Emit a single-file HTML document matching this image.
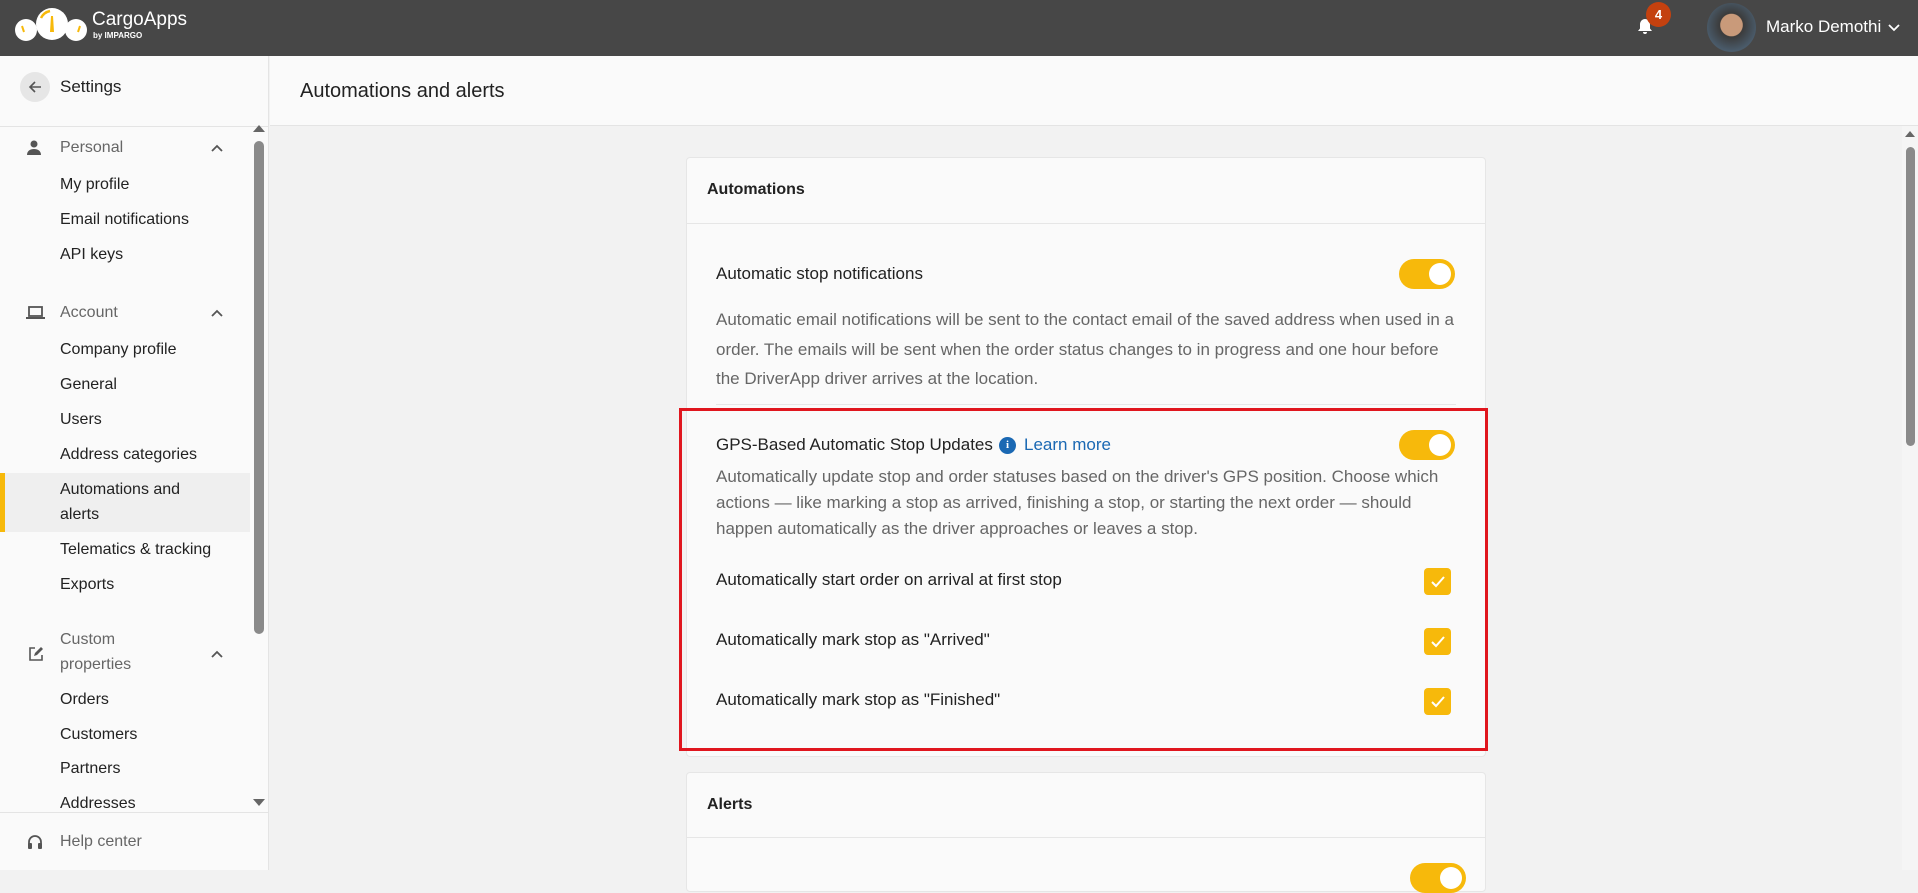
<!DOCTYPE html>
<html><head><meta charset="utf-8">
<style>
*{margin:0;padding:0;box-sizing:border-box}
body{width:1918px;height:870px;overflow:hidden;font-family:"Liberation Sans",sans-serif;background:#f2f2f2;position:relative;color:#222}
.a{position:absolute;white-space:nowrap}
.top{left:0;top:0;width:1918px;height:56px;background:#474747}
.side{left:0;top:56px;width:269px;height:814px;background:#fafafa;border-right:1px solid #e4e4e4}
.si{font-size:16px;color:#222;left:60px}
.sh{font-size:16px;color:#666;left:60px}
.card{background:#fafafa;border:1px solid #e6e6e6;border-radius:4px}
.tog{width:56px;height:30px;border-radius:15px;background:#f7b90b}
.tog::after{content:"";position:absolute;right:4px;top:4px;width:22px;height:22px;border-radius:50%;background:#fff}
.cb{width:27px;height:27px;border-radius:4px;background:#f7b90b}
.desc{font-size:17px;color:#666;line-height:29.5px;white-space:normal}
.lbl{font-size:17px;color:#222}
</style></head><body>
<div class="a top"></div>
<svg class="a" style="left:12px;top:6px" width="80" height="38" viewBox="0 0 80 38">
<circle cx="14" cy="24" r="11" fill="#fff"/><circle cx="64" cy="24" r="11" fill="#fff"/>
<circle cx="40" cy="18" r="16" fill="#fff"/>
<path d="M29 12 A13 13 0 0 1 38 5" stroke="#f7b90b" stroke-width="2.5" fill="none"/>
<path d="M39 10 L41 10 L42 26 L38 26Z" fill="#f7b90b"/>
<path d="M10 20 L12 26" stroke="#f7b90b" stroke-width="2"/><path d="M68 20 L66 26" stroke="#f7b90b" stroke-width="2"/>
</svg>
<div class="a" style="left:92px;top:9px;color:#fff;font-size:19px">CargoApps</div>
<div class="a" style="left:93px;top:31px;color:#fff;font-size:8px;font-weight:bold">by IMPARGO</div>
<svg class="a" style="left:1637px;top:18px" width="16" height="18" viewBox="0 0 16 18"><path d="M8 1c-3 0-5 2.5-5 5.5v4L1 13h14l-2-2.5v-4C13 3.5 11 1 8 1z M6 14a2 2 0 0 0 4 0z" fill="#fff"/></svg>
<div class="a" style="left:1646px;top:2px;width:25px;height:25px;border-radius:50%;background:#c4410f;color:#fff;font-size:13px;font-weight:bold;text-align:center;line-height:25px">4</div>
<div class="a" style="left:1707px;top:3px;width:49px;height:49px;border-radius:50%;background:radial-gradient(circle at 50% 45%,#c99a7a 0 30%,#3b3b3b 32%,#4a5b6a 70%)"></div>
<div class="a" style="left:1766px;top:17px;color:#fff;font-size:17px">Marko Demothi</div>
<svg class="a" style="left:1888px;top:24px" width="12" height="8"><path d="M1 1l5 5 5-5" stroke="#fff" stroke-width="1.8" fill="none"/></svg>

<div class="a side"></div>
<div class="a" style="left:0;top:126px;width:269px;height:1px;background:#e4e4e4"></div>
<div class="a" style="left:20px;top:72px;width:30px;height:30px;border-radius:50%;background:#e6e6e6"></div>
<svg class="a" style="left:28px;top:80px" width="14" height="14"><path d="M13 7H2M7 2L2 7l5 5" stroke="#555" stroke-width="1.6" fill="none"/></svg>
<div class="a" style="left:60px;top:77px;font-size:17px;color:#222">Settings</div>
<svg class="a" style="left:27px;top:140px" width="14" height="16"><circle cx="7" cy="4" r="3.5" fill="#555"/><path d="M0 15c0-4 3-6 7-6s7 2 7 6z" fill="#555"/></svg>
<div class="a sh" style="top:139px">Personal</div>
<svg class="a" style="left:211px;top:144px" width="12" height="8"><path d="M1 7l5-5 5 5" stroke="#555" stroke-width="1.8" fill="none"/></svg>
<div class="a si" style="top:176px">My profile</div>
<div class="a si" style="top:211px">Email notifications</div>
<div class="a si" style="top:246px">API keys</div>
<svg class="a" style="left:26px;top:306px" width="19" height="14"><rect x="3" y="1" width="13" height="9" fill="none" stroke="#555" stroke-width="1.8"/><path d="M0 12h19" stroke="#555" stroke-width="2"/></svg>
<div class="a sh" style="top:304px">Account</div>
<svg class="a" style="left:211px;top:309px" width="12" height="8"><path d="M1 7l5-5 5 5" stroke="#555" stroke-width="1.8" fill="none"/></svg>
<div class="a si" style="top:341px">Company profile</div>
<div class="a si" style="top:376px">General</div>
<div class="a si" style="top:411px">Users</div>
<div class="a si" style="top:446px">Address categories</div>
<div class="a" style="left:0;top:473px;width:250px;height:59px;background:#efefef"></div>
<div class="a" style="left:0;top:473px;width:5px;height:59px;background:#f7b90b"></div>
<div class="a si" style="top:481px">Automations and</div>
<div class="a si" style="top:506px">alerts</div>
<div class="a si" style="top:541px">Telematics &amp; tracking</div>
<div class="a si" style="top:576px">Exports</div>
<svg class="a" style="left:28px;top:646px" width="16" height="16"><path d="M7 2H2v12h12V9" stroke="#555" stroke-width="1.6" fill="none"/><path d="M6 10l1-3 6-6 2 2-6 6z" fill="#555"/></svg>
<div class="a sh" style="top:631px">Custom</div>
<div class="a sh" style="top:656px">properties</div>
<svg class="a" style="left:211px;top:650px" width="12" height="8"><path d="M1 7l5-5 5 5" stroke="#555" stroke-width="1.8" fill="none"/></svg>
<div class="a si" style="top:691px">Orders</div>
<div class="a si" style="top:726px">Customers</div>
<div class="a si" style="top:760px">Partners</div>
<div class="a si" style="top:795px">Addresses</div>
<svg class="a" style="left:253px;top:124px" width="12" height="9"><path d="M0 8L6 1l6 7z" fill="#666"/></svg>
<div class="a" style="left:254px;top:141px;width:10px;height:493px;border-radius:5px;background:#8a8a8a"></div>
<svg class="a" style="left:253px;top:798px" width="12" height="9"><path d="M0 1L6 8l6-7z" fill="#666"/></svg>
<div class="a" style="left:0;top:812px;width:269px;height:58px;background:#fafafa;border-top:1px solid #e4e4e4;border-right:1px solid #e4e4e4"></div>
<svg class="a" style="left:27px;top:835px" width="16" height="16"><path d="M2 9V7a6 6 0 0 1 12 0v2" stroke="#555" stroke-width="1.8" fill="none"/><rect x="1" y="8" width="4" height="6" rx="1" fill="#555"/><rect x="11" y="8" width="4" height="6" rx="1" fill="#555"/></svg>
<div class="a sh" style="top:833px">Help center</div>

<div class="a" style="left:270px;top:56px;width:1648px;height:70px;background:#fafafa;border-bottom:1px solid #e4e4e4"></div>
<div class="a" style="left:300px;top:80px;font-size:20px;color:#222">Automations and alerts</div>

<div class="a card" style="left:686px;top:157px;width:800px;height:600px"></div>
<div class="a" style="left:687px;top:223px;width:798px;height:1px;background:#e6e6e6"></div>
<div class="a" style="left:707px;top:181px;font-size:16px;font-weight:bold;color:#222">Automations</div>
<div class="a lbl" style="left:716px;top:264px">Automatic stop notifications</div>
<div class="a tog" style="left:1399px;top:259px"></div>
<div class="a desc" style="left:716px;top:305px;width:740px">Automatic email notifications will be sent to the contact email of the saved address when used in a order. The emails will be sent when the order status changes to in progress and one hour before the DriverApp driver arrives at the location.</div>
<div class="a" style="left:716px;top:404px;width:740px;height:1px;background:#e6e6e6"></div>

<div class="a" style="left:679px;top:408px;width:809px;height:343px;border:3px solid #e0161e"></div>
<div class="a lbl" style="left:716px;top:435px">GPS-Based Automatic Stop Updates</div>
<div class="a" style="left:999px;top:437px;width:17px;height:17px;border-radius:50%;background:#1a68b3;color:#fff;font-size:11px;font-weight:bold;text-align:center;line-height:17px;font-family:'Liberation Serif',serif">i</div>
<div class="a" style="left:1024px;top:435px;font-size:17px;color:#1a68b3">Learn more</div>
<div class="a tog" style="left:1399px;top:430px"></div>
<div class="a desc" style="left:716px;top:464px;width:740px;line-height:26px">Automatically update stop and order statuses based on the driver's GPS position. Choose which actions — like marking a stop as arrived, finishing a stop, or starting the next order — should happen automatically as the driver approaches or leaves a stop.</div>
<div class="a lbl" style="left:716px;top:570px">Automatically start order on arrival at first stop</div>
<div class="a lbl" style="left:716px;top:630px">Automatically mark stop as "Arrived"</div>
<div class="a lbl" style="left:716px;top:690px">Automatically mark stop as "Finished"</div>
<div class="a cb" style="left:1424px;top:568px"><svg width="27" height="27"><path d="M8 14l4 4 8-9" stroke="#fff" stroke-width="2" fill="none"/></svg></div>
<div class="a cb" style="left:1424px;top:628px"><svg width="27" height="27"><path d="M8 14l4 4 8-9" stroke="#fff" stroke-width="2" fill="none"/></svg></div>
<div class="a cb" style="left:1424px;top:688px"><svg width="27" height="27"><path d="M8 14l4 4 8-9" stroke="#fff" stroke-width="2" fill="none"/></svg></div>

<div class="a card" style="left:686px;top:772px;width:800px;height:120px"></div>
<div class="a" style="left:687px;top:837px;width:798px;height:1px;background:#e6e6e6"></div>
<div class="a" style="left:707px;top:796px;font-size:16px;font-weight:bold;color:#222">Alerts</div>
<div class="a tog" style="left:1410px;top:863px"></div>

<div class="a" style="left:1902px;top:126px;width:16px;height:744px;background:#f5f5f5"></div>
<svg class="a" style="left:1905px;top:130px" width="10" height="8"><path d="M0 7L5 1l5 6z" fill="#666"/></svg>
<div class="a" style="left:1906px;top:147px;width:9px;height:299px;border-radius:5px;background:#8a8a8a"></div>
</body></html>
